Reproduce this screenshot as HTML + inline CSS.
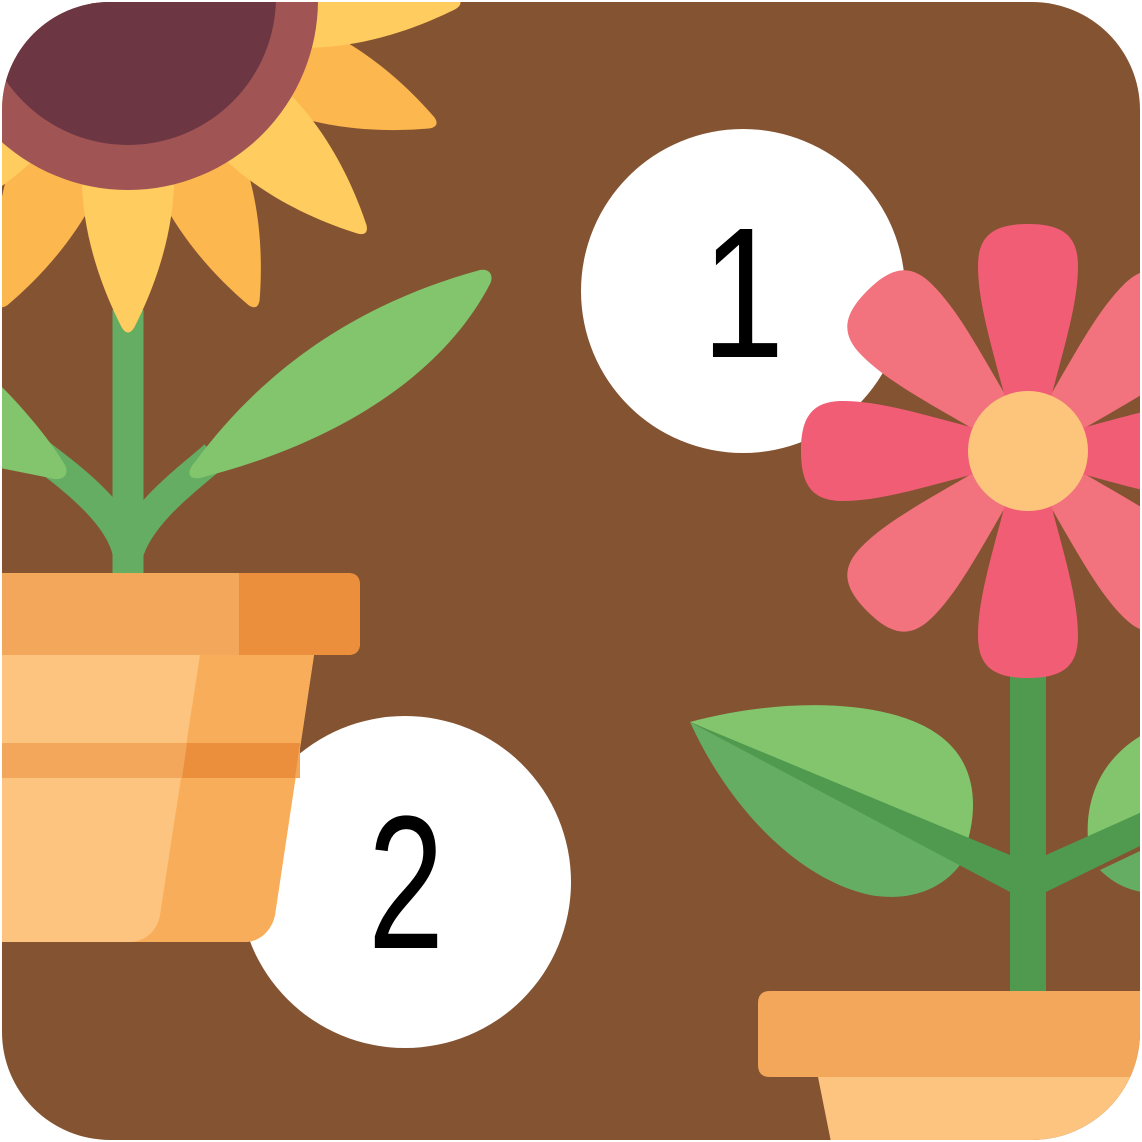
<!DOCTYPE html>
<html><head><meta charset="utf-8"><style>html,body{margin:0;padding:0;background:#fff}svg{display:block}</style></head>
<body>
<svg width="1142" height="1142" viewBox="0 0 1142 1142" xmlns="http://www.w3.org/2000/svg">
<defs>
<clipPath id="c"><rect x="2" y="2" width="1138" height="1138" rx="108"/></clipPath>
<path id="sp" d="M-45,150 C-52,220 -28,285 -6,328 Q0,337 6,328 C28,285 52,220 45,150 Z"/>
<path id="fp" d="M-22,-50 C-38,-110 -50,-150 -50,-185 C-50,-215 -35,-227 0,-227 C35,-227 50,-215 50,-185 C50,-150 38,-110 22,-50 Z"/>
</defs>
<g clip-path="url(#c)">
<rect x="0" y="0" width="1142" height="1142" fill="#845332"/>
<circle cx="743" cy="291" r="162" fill="#fff"/>
<text transform="translate(743,357) scale(0.8,1)" font-family="Liberation Sans, sans-serif" font-size="186" text-anchor="middle" fill="#000">1</text>
<circle cx="405" cy="882" r="166" fill="#fff"/>
<text transform="translate(406,948) scale(0.72,1)" font-family="Liberation Sans, sans-serif" font-size="190" text-anchor="middle" fill="#000">2</text>

<path d="M128,310 L128,575" stroke="#65AD63" stroke-width="31" fill="none"/>
<path d="M128,575 L128,555 C120,510 60,470 35,450" stroke="#65AD63" stroke-width="30" fill="none"/>
<path d="M128,575 L128,555 C140,510 200,470 215,455" stroke="#65AD63" stroke-width="30" fill="none"/>
<path d="M0,385 C25,410 50,440 65,465 C70,475 62,482 50,478 L0,468 Z" fill="#82C56D"/>
<path d="M195,462 C270,360 370,300 480,270 C490,268 494,276 490,284 C440,380 330,445 200,478 C188,480 186,472 195,462 Z" fill="#82C56D"/>
<g transform="translate(128,0)">
<use href="#sp" fill="#FCB74F" transform="rotate(22.6)"/>
<use href="#sp" fill="#FCB74F" transform="rotate(-22.6)"/>
<use href="#sp" fill="#FCB74F" transform="rotate(-68)"/>
<use href="#sp" fill="#FECC5F" transform="rotate(0)"/>
<use href="#sp" fill="#FECC5F" transform="rotate(-45.6)"/>
<use href="#sp" fill="#FECC5F" transform="rotate(-89.5)"/>
<use href="#sp" fill="#FECC5F" transform="rotate(45)"/>
</g>
<circle cx="128" cy="0" r="190" fill="#A15454"/>
<circle cx="128" cy="-3" r="148" fill="#6D3643"/>

<path d="M0,655 L314,655 L275,915 C272,930 260,942 245,942 L0,942 Z" fill="#FCC47F"/>
<path d="M200,655 L314,655 L275,915 C272,930 260,942 245,942 L130,942 C145,942 158,930 160,915 Z" fill="#F8AD5B"/>
<rect x="0" y="743" width="300" height="35" fill="#F3A75A"/>
<path d="M187,743 L300,743 L295,778 L182,778 Z" fill="#EB8F3D"/>
<path d="M0,573 L348,573 Q360,573 360,585 L360,643 Q360,655 348,655 L0,655 Z" fill="#F3A75A"/>
<path d="M239,573 L348,573 Q360,573 360,585 L360,643 Q360,655 348,655 L239,655 Z" fill="#EB8F3D"/>

<rect x="1010" y="660" width="36" height="340" fill="#4F9A4F"/>
<path d="M690,722 C790,695 900,700 945,740 C980,770 975,815 968,840 L690,722 Z" fill="#82C56D"/>
<path d="M690,722 C730,810 800,880 870,895 C915,903 945,885 960,865 Z" fill="#65AD63"/>
<path d="M1142,735 C1100,760 1085,800 1088,840 L1142,820 Z" fill="#82C56D"/>
<path d="M1100,870 C1115,885 1130,890 1142,892 L1142,850 Z" fill="#65AD63"/>
<path d="M690,722 L1010,855 L1046,855 L1142,812 L1142,845 L1046,892 L1028,902 L1010,892 Z" fill="#4F9A4F"/>
<g transform="translate(1028,451)">
<use href="#fp" fill="#F2727D" transform="rotate(-45)"/>
<use href="#fp" fill="#F2727D" transform="rotate(45)"/>
<use href="#fp" fill="#F2727D" transform="rotate(135)"/>
<use href="#fp" fill="#F2727D" transform="rotate(-135)"/>
<use href="#fp" fill="#F05D75" transform="rotate(0)"/>
<use href="#fp" fill="#F05D75" transform="rotate(90)"/>
<use href="#fp" fill="#F05D75" transform="rotate(180)"/>
<use href="#fp" fill="#F05D75" transform="rotate(-90)"/>
</g>
<circle cx="1028" cy="451" r="60" fill="#FDC57C"/>

<path d="M818,1077 L1142,1077 L1142,1142 L831,1142 Z" fill="#FCC47F"/>
<path d="M770,991 L1142,991 L1142,1077 L770,1077 Q758,1077 758,1065 L758,1003 Q758,991 770,991 Z" fill="#F3A75A"/>
</g>
</svg>
</body></html>
